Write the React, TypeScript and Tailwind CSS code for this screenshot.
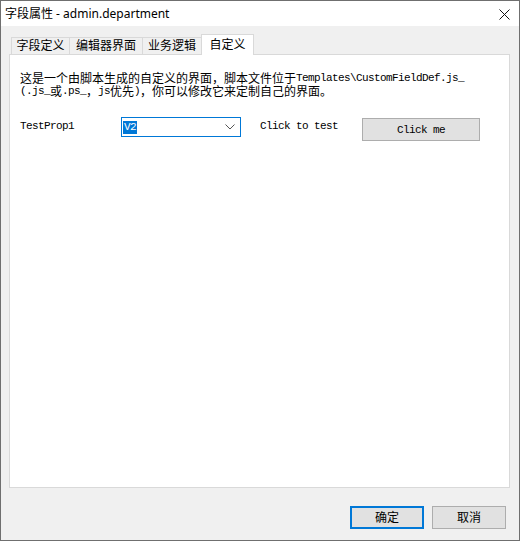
import type { ReactNode } from 'react';

const TABS = ['字段定义', '编辑器界面', '业务逻辑', '自定义'];
const TAB_WIDTHS = ['w-[59px]', 'w-[74px]', 'w-[60px]', 'w-[53px]'];

// ASCII runs get the narrow monospace face, CJK stays in the sans face
function Mixed({ text }: { text: string }) {
  const parts = text.split(/([\x20-\x7e]+)/).filter(Boolean);
  return (
    <>
      {parts.map((part, i) =>
        /^[\x20-\x7e]+$/.test(part) ? (
          <span
            key={i}
            className="inline-block h-[13px] leading-[13px] font-['Liberation_Mono',monospace] text-[11px] tracking-[-0.6px] whitespace-pre"
          >
            {part}
          </span>
        ) : (
          <span key={i} className="inline-block h-[13px] leading-[13px]">
            {part}
          </span>
        )
      )}
    </>
  );
}

function Mono({ children }: { children: ReactNode }) {
  return (
    <span className="font-['Liberation_Mono',monospace] text-[11px] tracking-[-0.6px] whitespace-pre leading-[14px]">
      {children}
    </span>
  );
}

export default function App() {
  return (
    <div className="w-[520px] h-[541px] border border-[#6f6f6f] bg-[#f0f0f0] flex flex-col font-['Noto_Sans','Noto_Sans_CJK_SC',sans-serif] text-[12px] text-black overflow-hidden">
      {/* title bar */}
      <div className="h-[25px] bg-white flex items-center justify-between pl-[4px] pr-[9px] shrink-0">
        <span className="leading-none">字段属性 - admin.department</span>
        <svg width="11" height="11" viewBox="0 0 11 11" className="mt-[1px]">
          <path d="M0.5 0.5 L10.5 10.5 M10.5 0.5 L0.5 10.5" stroke="#111" strokeWidth="1" />
        </svg>
      </div>

      <div className="flex-1 flex flex-col pl-[8px] pr-[9px] pt-[8px]">
        {/* tabs */}
        <div className="h-[20px] flex items-end pl-[2px]">
          {TABS.map((t, i) => {
            const active = i === TABS.length - 1;
            return (
              <div
                key={t}
                className={
                  (active
                    ? 'h-[21px] mb-[-1px] bg-white relative z-10 '
                    : 'h-[17px] bg-[#f0f0f0] ') +
                  TAB_WIDTHS[i] +
                  (i > 0 ? ' -ml-px' : '') +
                  ' border border-b-0 border-[#d9d9d9] flex items-center justify-center leading-none'
                }
              >
                <span className={active ? 'pb-[1px]' : ''}>{t}</span>
              </div>
            );
          })}
        </div>

        {/* tab page */}
        <div className="w-[501px] h-[434px] bg-white border border-[#d9d9d9] pl-[10px] pt-[17px]">
          <div className="flex flex-col">
            <div className="h-[13px] flex items-center whitespace-nowrap">
              <Mixed text="这是一个由脚本生成的自定义的界面，脚本文件位于Templates\CustomFieldDef.js_" />
            </div>
            <div className="h-[13px] flex items-center whitespace-nowrap">
              <Mixed text="(.js_或.ps_，js优先)，你可以修改它来定制自己的界面。" />
            </div>
          </div>

          <div className="flex items-start mt-[19px]">
            <div className="w-[101px] h-[18px] flex items-center">
              <Mono>TestProp1</Mono>
            </div>
            <div className="w-[120px] h-[20px] border border-[#0078d7] flex items-center justify-between pl-[1px] pr-[5px]">
              <span className="h-[13px] px-[1px] bg-[#0078d7] text-white flex items-center">
                <Mono>V2</Mono>
              </span>
              <svg width="10" height="6" viewBox="0 0 10 6">
                <path d="M0.5 0.5 L5 5 L9.5 0.5" fill="none" stroke="#555" strokeWidth="1" />
              </svg>
            </div>
            <div className="ml-[19px] w-[102px] h-[18px] flex items-center">
              <Mono>Click to test</Mono>
            </div>
            <div className="w-[118px] h-[23px] mt-[1px] bg-[#e1e1e1] border border-[#adadad] flex items-center justify-center">
              <Mono>Click me</Mono>
            </div>
          </div>
        </div>

        {/* dialog buttons */}
        <div className="flex justify-end gap-[8px] pt-[18px] pr-[4px]">
          <button className="w-[74px] h-[23px] bg-[#e1e1e1] border-2 border-[#0078d7] flex items-center justify-center leading-none">
            确定
          </button>
          <button className="w-[74px] h-[23px] bg-[#e1e1e1] border border-[#adadad] flex items-center justify-center leading-none">
            取消
          </button>
        </div>
      </div>
    </div>
  );
}
